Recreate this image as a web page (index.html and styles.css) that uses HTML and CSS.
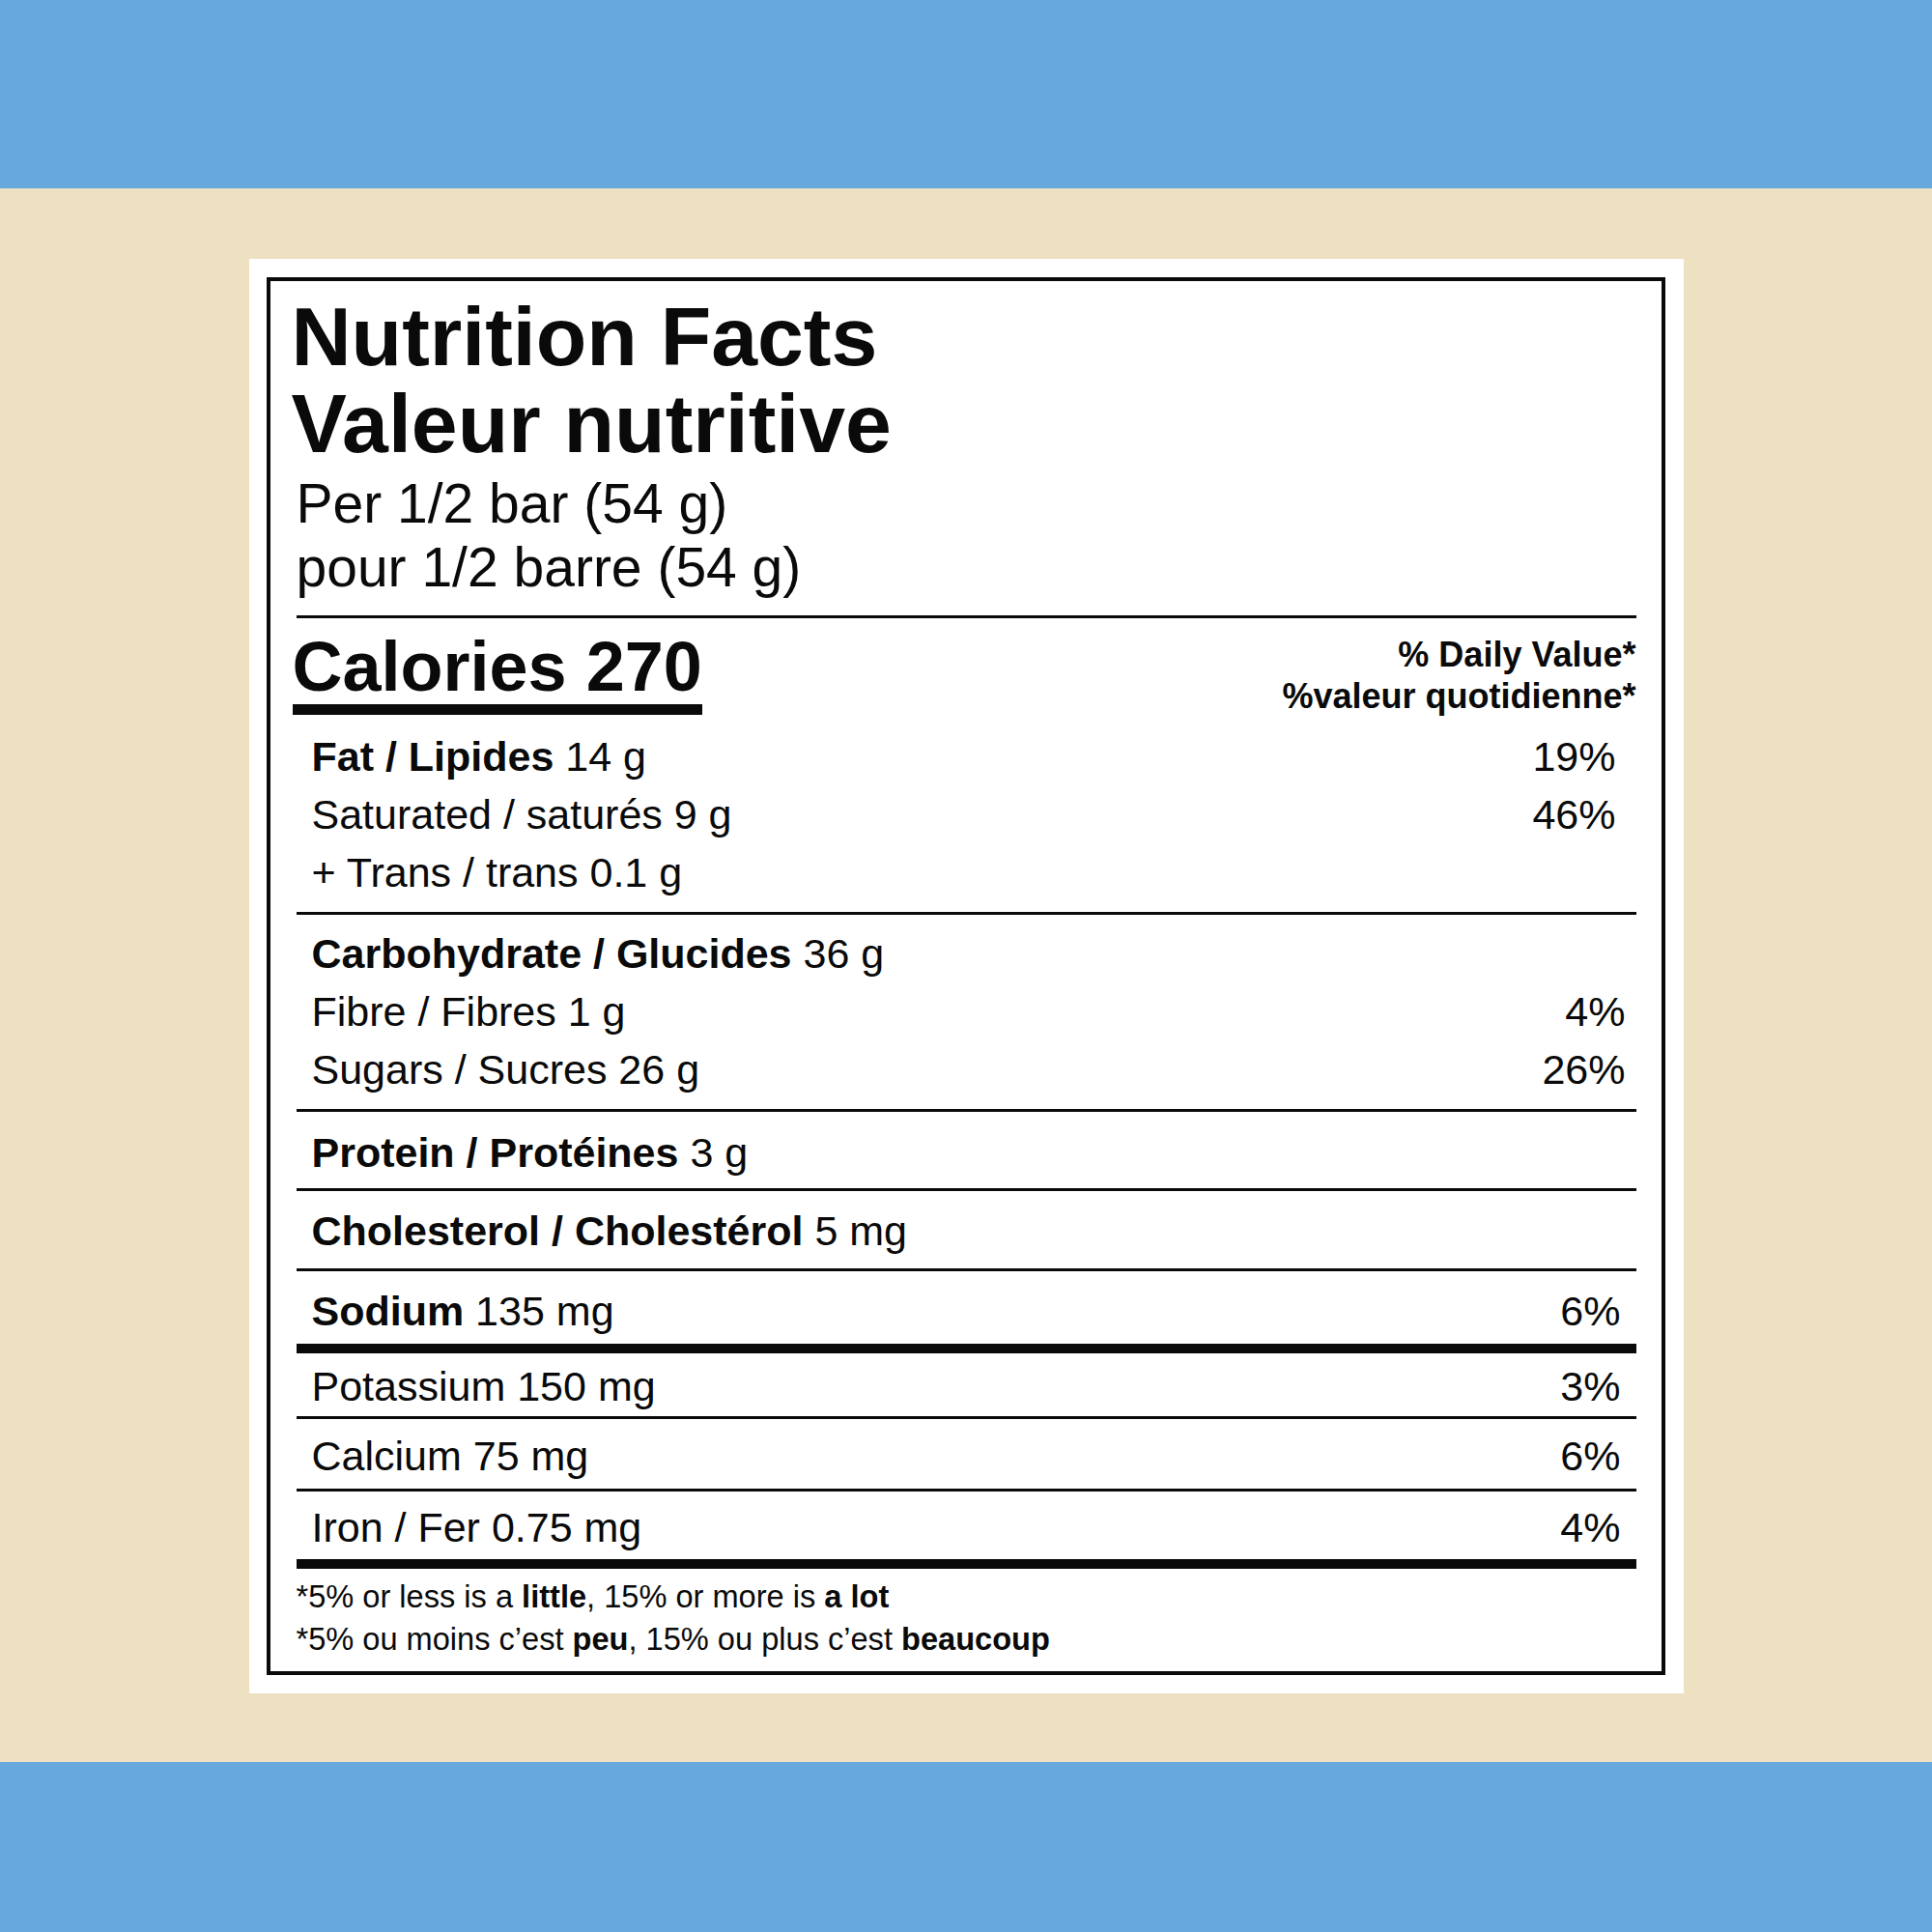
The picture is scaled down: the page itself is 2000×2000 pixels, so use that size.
FILE: index.html
```html
<!DOCTYPE html>
<html lang="en">
<head>
<meta charset="utf-8">
<title>Nutrition Facts</title>
<link rel="stylesheet" href="styles.css">
</head>
<body>
<div class="page">
  <div class="band band-top"></div>
  <div class="stage">
    <div class="label-wrap">
      <div class="label">
        <div class="title">
          <div>Nutrition Facts</div>
          <div>Valeur nutritive</div>
        </div>
        <div class="serving">
          <div>Per 1/2 bar (54 g)</div>
          <div>pour 1/2 barre (54 g)</div>
        </div>
        <div class="cal-row">
          <div class="calories">Calories 270</div>
          <div class="dv-head">
            <div>% Daily Value*</div>
            <div>%valeur quotidienne*</div>
          </div>
        </div>
        <div class="sec sec-fat">
          <div class="row"><span><b>Fat / Lipides</b> 14 g</span><span>19%</span></div>
          <div class="row"><span>Saturated / saturés 9 g</span><span>46%</span></div>
          <div class="row"><span>+ Trans / trans 0.1 g</span><span></span></div>
        </div>
        <div class="sec sec-carb">
          <div class="row"><span><b>Carbohydrate / Glucides</b> 36 g</span><span></span></div>
          <div class="row"><span>Fibre / Fibres 1 g</span><span>4%</span></div>
          <div class="row"><span>Sugars / Sucres 26 g</span><span>26%</span></div>
        </div>
        <div class="sec sec-protein">
          <div class="row"><span><b>Protein / Protéines</b> 3 g</span><span></span></div>
        </div>
        <div class="sec sec-chol">
          <div class="row"><span><b>Cholesterol / Cholestérol</b> 5 mg</span><span></span></div>
        </div>
        <div class="sec sec-sodium">
          <div class="row"><span><b>Sodium</b> 135 mg</span><span>6%</span></div>
        </div>
        <div class="sec sec-pot">
          <div class="row"><span>Potassium 150 mg</span><span>3%</span></div>
        </div>
        <div class="sec sec-calc">
          <div class="row"><span>Calcium 75 mg</span><span>6%</span></div>
        </div>
        <div class="sec sec-iron">
          <div class="row"><span>Iron / Fer 0.75 mg</span><span>4%</span></div>
        </div>
        <div class="foot">
          <div>*5% or less is a <b>little</b>, 15% or more is <b>a lot</b></div>
          <div>*5% ou moins c’est <b>peu</b>, 15% ou plus c’est <b>beaucoup</b></div>
        </div>
      </div>
    </div>
  </div>
  <div class="band band-bottom"></div>
</div>
</body>
</html>
```

FILE: styles.css
```css
html, body {
  margin: 0;
  padding: 0;
}
body {
  font-family: "Liberation Sans", Arial, Helvetica, sans-serif;
  color: #0a0a0a;
}
.page {
  width: 2000px;
  height: 2000px;
  display: flex;
  flex-direction: column;
}
.band {
  background: #67a9dc;
}
.band-top { height: 195px; }
.band-bottom { height: 176px; }
.stage {
  height: 1629px;
  background: #ede1c1;
  display: flex;
  justify-content: center;
  padding-top: 73px;
  box-sizing: border-box;
}
.label-wrap {
  background: #ffffff;
  padding: 19px 19px 19px 18px;
  height: 1485px;
  box-sizing: border-box;
}
.label {
  width: 1448px;
  height: 1447px;
  box-sizing: border-box;
  border: 4px solid #0a0a0a;
  padding: 12px 26px 0 27px;
}
.title {
  font-weight: 700;
  font-size: 86px;
  line-height: 90px;
  margin-left: -5px;
}
.serving {
  font-size: 57px;
  line-height: 66px;
  margin-top: 5px;
  padding-bottom: 17px;
  border-bottom: 3px solid #0a0a0a;
}
.cal-row {
  display: flex;
  justify-content: space-between;
  align-items: flex-start;
  padding-top: 12px;
}
.calories {
  font-weight: 700;
  font-size: 72px;
  line-height: 77px;
  margin-left: -4px;
  border-bottom: 11px solid #0a0a0a;
}
.dv-head {
  font-weight: 700;
  font-size: 36px;
  line-height: 43px;
  text-align: right;
  padding-top: 4px;
}
.sec {
  padding-left: 16px;
  padding-right: 16px;
  border-bottom: 3px solid #0a0a0a;
}
.row {
  display: flex;
  justify-content: space-between;
  font-size: 43px;
  line-height: 60px;
  white-space: nowrap;
}
.row b { font-weight: 700; }
.sec-fat { padding-top: 11px; padding-bottom: 11px; padding-right: 21px; }
.sec-carb { padding-top: 10px; padding-bottom: 11px; padding-right: 11px; }
.sec-protein { padding-top: 12px; padding-bottom: 7px; }
.sec-chol { padding-top: 11px; padding-bottom: 9px; }
.sec-sodium { padding-top: 11px; padding-bottom: 4px; border-bottom-width: 10px; }
.sec-pot { padding-top: 4px; padding-bottom: 1px; }
.sec-calc { padding-top: 8px; padding-bottom: 4px; }
.sec-iron { padding-top: 7px; padding-bottom: 3px; border-bottom-width: 10px; }
.foot {
  font-size: 32.6px;
  line-height: 44px;
  padding-top: 7px;
}
.foot b { font-weight: 700; }
```
